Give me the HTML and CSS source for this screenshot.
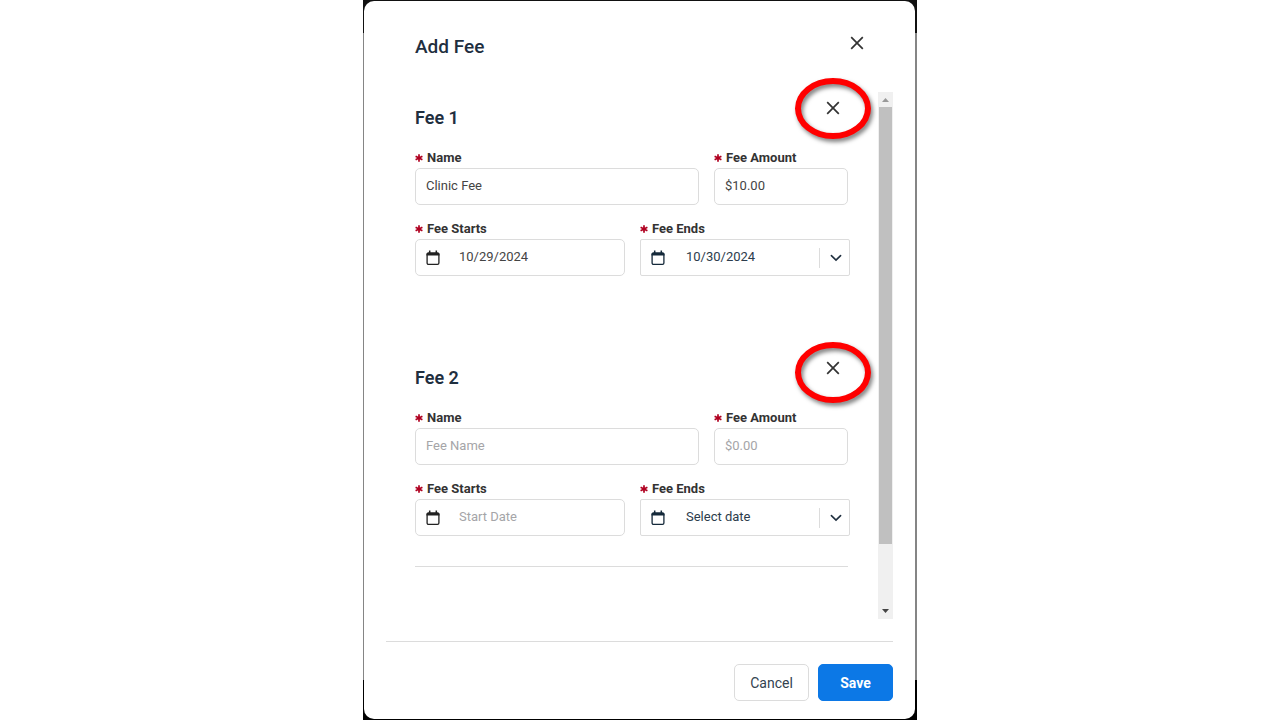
FILE: index.html
```html
<!DOCTYPE html>
<html lang="en">
<head>
<meta charset="utf-8">
<meta name="viewport" content="width=device-width, initial-scale=1">
<title>Add Fee</title>
<link rel="stylesheet" href="styles.css">
</head>
<body>
<svg class="sprite" aria-hidden="true">
  <symbol id="icon-close" viewBox="0 0 14 14"><path d="M1.2 1.2 12.8 12.8M12.8 1.2 1.2 12.8" fill="none" stroke="currentColor" stroke-width="1.7"/></symbol>
  <symbol id="icon-calendar" viewBox="0 0 14 16"><rect x="1.1" y="3.1" width="11.800" height="11.300" rx="1.400" fill="none" stroke="currentColor" stroke-width="1.3"/><path d="M.5 5.600V4Q.5 2.400 2 2.400h10q1.500 0 1.500 1.600v1.600z" fill="currentColor"/><path d="M3.700.6v2.400M10.300.6v2.400" stroke="currentColor" stroke-width="1.500"/></symbol>
  <symbol id="icon-chevron" viewBox="0 0 12 8"><path d="M1.400 1.600 6 6.100l4.600-4.500" fill="none" stroke="currentColor" stroke-width="1.6" stroke-linecap="round"/></symbol>
  <symbol id="icon-required" viewBox="0 0 8 8"><path d="M4 .2v7.600M.6 2.200l6.800 3.600M7.400 2.200.6 5.800" fill="none" stroke="currentColor" stroke-width="1.7"/></symbol>
</svg>
<div class="backdrop">
  <main class="dialog" role="dialog" aria-labelledby="dialog-title">
    <header class="dialog-header">
      <h1 class="dialog-title" id="dialog-title">Add Fee</h1>
      <button class="close" type="button" aria-label="Close"><svg><use href="#icon-close"/></svg></button>
    </header>
    <div class="dialog-body">
      <form class="fees" id="fees">
        <section class="fee">
          <div class="fee-head">
            <h2 class="fee-title">Fee 1</h2>
            <button class="close" type="button" aria-label="Remove fee 1"><svg><use href="#icon-close"/></svg></button>
            <span class="ring"></span>
          </div>
          <div class="row row-name">
            <div class="field">
              <label class="label" for="name1"><svg class="required"><use href="#icon-required"/></svg>Name</label>
              <div class="control"><input class="input" id="name1" type="text" value="Clinic Fee"></div>
            </div>
            <div class="field">
              <label class="label" for="amount1"><svg class="required"><use href="#icon-required"/></svg>Fee Amount</label>
              <div class="control"><input class="input" id="amount1" type="text" value="$10.00"></div>
            </div>
          </div>
          <div class="row row-dates">
            <div class="field">
              <label class="label" for="start1"><svg class="required"><use href="#icon-required"/></svg>Fee Starts</label>
              <div class="control control-date"><svg class="calendar"><use href="#icon-calendar"/></svg><input class="input" id="start1" type="text" value="10/29/2024"></div>
            </div>
            <div class="field">
              <label class="label" for="end1"><svg class="required"><use href="#icon-required"/></svg>Fee Ends</label>
              <div class="control control-select"><svg class="calendar"><use href="#icon-calendar"/></svg><select class="input" id="end1"><option>10/30/2024</option></select><span class="divider"></span><svg class="chevron"><use href="#icon-chevron"/></svg></div>
            </div>
          </div>
        </section>
        <section class="fee">
          <div class="fee-head">
            <h2 class="fee-title">Fee 2</h2>
            <button class="close" type="button" aria-label="Remove fee 2"><svg><use href="#icon-close"/></svg></button>
            <span class="ring ring-low"></span>
          </div>
          <div class="row row-name">
            <div class="field">
              <label class="label" for="name2"><svg class="required"><use href="#icon-required"/></svg>Name</label>
              <div class="control"><input class="input" id="name2" type="text" placeholder="Fee Name"></div>
            </div>
            <div class="field">
              <label class="label" for="amount2"><svg class="required"><use href="#icon-required"/></svg>Fee Amount</label>
              <div class="control"><input class="input" id="amount2" type="text" placeholder="$0.00"></div>
            </div>
          </div>
          <div class="row row-dates">
            <div class="field">
              <label class="label" for="start2"><svg class="required"><use href="#icon-required"/></svg>Fee Starts</label>
              <div class="control control-date"><svg class="calendar"><use href="#icon-calendar"/></svg><input class="input" id="start2" type="text" placeholder="Start Date"></div>
            </div>
            <div class="field">
              <label class="label" for="end2"><svg class="required"><use href="#icon-required"/></svg>Fee Ends</label>
              <div class="control control-select"><svg class="calendar"><use href="#icon-calendar"/></svg><select class="input" id="end2"><option>Select date</option></select><span class="divider"></span><svg class="chevron"><use href="#icon-chevron"/></svg></div>
            </div>
          </div>
        </section>
        <hr class="rule">
      </form>
      <div class="scrollbar" aria-hidden="true">
        <svg class="arrow arrow-up" viewBox="0 0 15 15"><path d="M4 10h7L7.500 6z" fill="currentColor"/></svg>
        <div class="track"><div class="thumb"></div></div>
        <svg class="arrow" viewBox="0 0 15 15"><path d="M4 5h7L7.500 9z" fill="currentColor"/></svg>
      </div>
    </div>
    <footer class="dialog-footer">
      <button class="button" type="button">Cancel</button>
      <button class="button button-primary" type="submit" form="fees">Save</button>
    </footer>
  </main>
</div>
</body>
</html>
```
FILE: styles.css
```css
* { box-sizing: border-box; }

body {
  margin: 0;
  background: #fff;
  color: #333;
  font: 13px/18px Roboto, "Liberation Sans", sans-serif;
}

.sprite { display: none; }

.backdrop {
  display: flex;
  max-width: 554px;
  min-height: 100vh;
  margin: 0 auto;
  padding: 1px 2px 1px 1px;
  background: linear-gradient(#111 33px, #858585 33px calc(100% - 40px), #000 calc(100% - 40px));
}

.dialog {
  display: flex;
  flex: 1;
  flex-direction: column;
  padding: 0 22px 18px;
  border-radius: 10px;
  background: #fff;
}

.dialog-header {
  display: flex;
  align-items: flex-start;
  justify-content: space-between;
  height: 91px;
  padding: 30px 24px 0 29px;
}

.dialog-title,
.fee-title {
  margin: 0;
  color: #1f2f3f;
  font-size: 18px;
  line-height: 24px;
  font-weight: 500;
}

.dialog-title { padding-top: 4px; font-size: 19px; }
.fee-title { padding-top: 14px; font-weight: 600; }

.close {
  display: grid;
  place-items: center;
  width: 24px;
  height: 24px;
  padding: 0;
  border: 0;
  background: none;
  color: #333;
}

.close svg { width: 14px; height: 14px; }

.dialog-body {
  display: flex;
  flex: 1;
  justify-content: space-between;
}

.fees { flex: 1; padding: 0 28px 0 29px; }
.fee { margin-bottom: 76px; }
.fee + .fee { margin-bottom: 30px; }

.fee-head {
  position: relative;
  display: flex;
  justify-content: space-between;
  height: 57px;
  padding: 0 5px 0 0;
}

.fee-head .close { margin-top: 4px; }

.ring {
  position: absolute;
  top: -14px;
  right: -21px;
  width: 76px;
  height: 61px;
  border: 6px solid #f00;
  border-radius: 50%;
  filter: drop-shadow(2px 3px 2px rgba(0, 0, 0, .5));
  pointer-events: none;
}

.ring-low { top: -10px; }

.row { display: grid; gap: 15px; }
.row-name { grid-template-columns: 284fr 134fr; padding-right: 2px; margin-bottom: 15px; }
.row-dates { grid-template-columns: 1fr 1fr; }

.label {
  display: flex;
  align-items: center;
  gap: 4px;
  margin-bottom: 1px;
  font-weight: 700;
}

.required { width: 8px; height: 8px; color: #b00020; }

.control {
  display: flex;
  align-items: center;
  height: 37px;
  padding: 0 10px;
  border: 1px solid #dcdcdc;
  border-radius: 5px;
}

.input {
  flex: 1;
  min-width: 0;
  width: 100%;
  height: 34px;
  padding: 0 0 2px;
  border: 0;
  outline: 0;
  appearance: none;
  background: none;
  color: #444;
  font: inherit;
}

.input::placeholder { color: #a5a5a8; opacity: 1; }
.calendar { flex: none; width: 14px; height: 16px; color: #222; }
.control-date .input { margin-left: 19px; }
.control-select { border-radius: 2px; padding: 0 7px 0 10px; color: #1f2f3f; }
.control-select .input { margin-left: 21px; padding-bottom: 1px; color: #2c3c4c; }
.control-select .calendar { color: #14293a; }
.divider { width: 1px; height: 20px; margin-right: 10px; background: #dcdcdc; }
.chevron { flex: none; width: 12px; height: 8px; }

.rule {
  margin: 0 2px 0 0;
  border: 0;
  border-top: 1px solid #dcdcdc;
}

.scrollbar {
  display: flex;
  flex: none;
  flex-direction: column;
  width: 15px;
  background: #f0f0f0;
}

.arrow { width: 15px; height: 15px; color: #444; }
.arrow-up { color: #999; }
.track { flex: 1; padding: 0 1px; }
.thumb { height: 88%; background: #c0c0c0; }

.dialog-footer {
  display: flex;
  justify-content: flex-end;
  gap: 9px;
  margin-top: 22px;
  padding-top: 22px;
  border-top: 1px solid #dcdcdc;
}

.button {
  min-width: 75px;
  height: 37px;
  padding: 0 14px;
  border: 1px solid #dcdcdc;
  border-radius: 5px;
  background: #fff;
  color: #33424f;
  font: 14px/20px Roboto, "Liberation Sans", sans-serif;
}

.button-primary {
  border-color: #0c78e6;
  background: #0c78e6;
  color: #fff;
  font-weight: 700;
}
```
